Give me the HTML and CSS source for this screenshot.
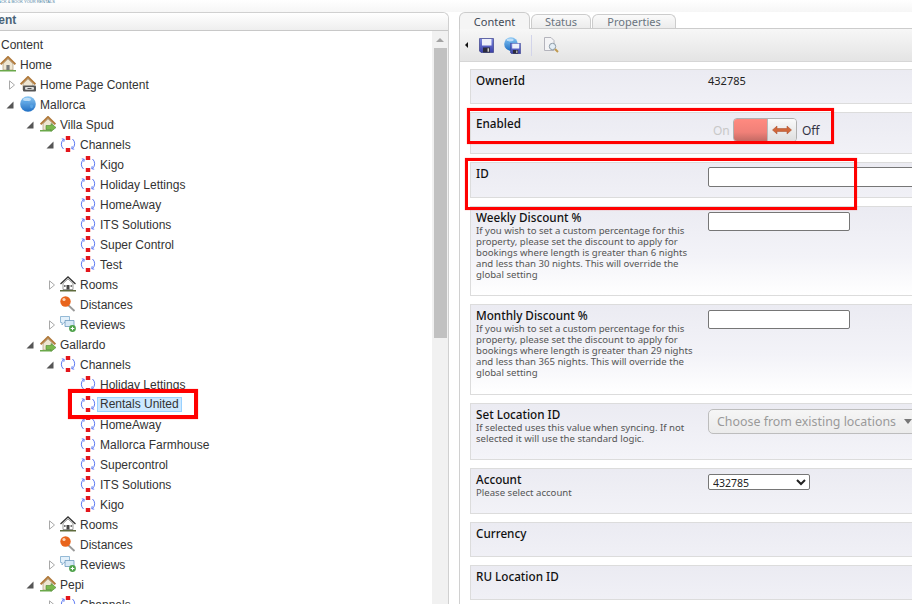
FILE: index.html
```html
<!DOCTYPE html>
<html lang="en">
<head>
<meta charset="utf-8">
<title>Content</title>
<link rel="stylesheet" href="styles.css">
</head>
<body>
<svg class="defs" width="0" height="0" aria-hidden="true">
  <defs>
    <linearGradient id="gBlue" x1="0" y1="0" x2="0" y2="1"><stop offset="0" stop-color="#8cc8f4"/><stop offset="1" stop-color="#1f6fc4"/></linearGradient>
    <linearGradient id="gDisk" x1="0" y1="0" x2="0" y2="1"><stop offset="0" stop-color="#7a86e0"/><stop offset="1" stop-color="#3a40a8"/></linearGradient>
    <symbol id="i-open" viewBox="0 0 8 8"><path d="M7.5 0.5V7.5H0.5Z" fill="#555"/></symbol>
    <symbol id="i-closed" viewBox="0 0 6 10"><path d="M0.5 0.8L5.5 5L0.5 9.2Z" fill="#fff" stroke="#a8a8a8"/></symbol>
    <symbol id="i-roof" viewBox="0 0 16 16">
      <path d="M3 8V14H13V8L8 3Z" fill="#efe6d2" stroke="#a08a68" stroke-width=".6"/>
      <path d="M0.600 8.400L8 1L15.400 8.400" fill="none" stroke="#b07a3c" stroke-width="2"/>
      <rect x="6.400" y="9" width="3.200" height="5" fill="#77797a"/>
      <path d="M0 14H16V15.500H0Z" fill="#6aa84a"/>
    </symbol>
    <symbol id="i-homelink" viewBox="0 0 16 16">
      <path d="M3 8V14H13V8L8 3Z" fill="#efe6d2" stroke="#a08a68" stroke-width=".6"/>
      <path d="M0.600 8.400L8 1L15.400 8.400" fill="none" stroke="#b07a3c" stroke-width="2"/>
      <rect x="3" y="9.500" width="13" height="6" rx="1" fill="#555"/>
      <rect x="5" y="11" width="9" height="2.800" rx="1" fill="#ddd"/>
      <rect x="7.500" y="12" width="4" height=".8" fill="#333"/>
    </symbol>
    <symbol id="i-globe" viewBox="0 0 16 16">
      <circle cx="8" cy="8" r="7.800" fill="url(#gBlue)"/>
      <path d="M3 6C5 3 7 3.500 8 5S5 8 4 7.500ZM10 9C12 8 14 9 13 11S10 13 10 9Z" fill="#5aa5e6"/>
      <ellipse cx="7" cy="3.400" rx="4" ry="1.600" fill="#cfe8fb" opacity=".8"/>
    </symbol>
    <symbol id="i-villa" viewBox="0 0 16 16">
      <path d="M3 8V14H13V8L8 3Z" fill="#efe6d2" stroke="#a08a68" stroke-width=".6"/>
      <path d="M0.600 8.400L8 1L15.400 8.400" fill="none" stroke="#b07a3c" stroke-width="2"/>
      <path d="M0 14H11V15.500H0Z" fill="#6aa84a"/>
      <path d="M6 9.500H11V7.500L16 11.500L11 15.500V13.500H6Z" fill="#7cb84e" stroke="#4a8a30" stroke-width=".6"/>
    </symbol>
    <symbol id="i-channel" viewBox="0 0 16 16">
      <path d="M3.500 3.500A6.300 6.300 0 0 0 3.500 13" fill="none" stroke="#4a6af0" stroke-width=".9"/>
      <path d="M1.800 2.800L4.300 3.300L3.800 5.800" fill="none" stroke="#4a6af0" stroke-width=".9"/>
      <path d="M12.500 12.500A6.300 6.300 0 0 0 12.500 3" fill="none" stroke="#4a6af0" stroke-width=".9"/>
      <path d="M14.200 13.200L11.700 12.700L12.200 10.200" fill="none" stroke="#4a6af0" stroke-width=".9"/>
      <rect x="5.800" y="0" width="4.400" height="4" fill="#e3161c"/>
      <rect x="5.800" y="12" width="4.400" height="4" fill="#e3161c"/>
    </symbol>
    <symbol id="i-rooms" viewBox="0 0 16 16">
      <path d="M3 7.500V13.500H13V7.500L8 3Z" fill="#fff" stroke="#555" stroke-width=".6"/>
      <path d="M0.500 8L8 1L15.500 8" fill="none" stroke="#333" stroke-width="1.300"/>
      <rect x="6.500" y="9" width="3" height="4.500" fill="#444"/>
      <rect x="4" y="9" width="1.600" height="2" fill="#777"/>
      <rect x="10.500" y="9" width="1.600" height="2" fill="#777"/>
      <path d="M0 14H16V15.500H0Z" fill="#5e6b3c"/>
    </symbol>
    <symbol id="i-pin" viewBox="0 0 16 16">
      <path d="M7 8L14.500 15" stroke="#999" stroke-width="1.800"/>
      <circle cx="5.500" cy="5.500" r="5.200" fill="#e8641c"/>
      <circle cx="4" cy="3.500" r="1.600" fill="#fbd3b4"/>
    </symbol>
    <symbol id="i-reviews" viewBox="0 0 16 16">
      <path d="M0.500 0.500H9.500V6.500H4L2 9V6.500H0.500Z" fill="#e4f1fb" stroke="#7ea9cc" stroke-width=".8"/>
      <path d="M5 4.500H14V10.500H12.500V12.500L10 10.500H5Z" fill="#d6e8f6" stroke="#6c98bd" stroke-width=".8"/>
      <circle cx="12.500" cy="12.500" r="3.400" fill="#4ea24a"/>
      <path d="M12.500 10.700V14.300M10.700 12.500H14.300" stroke="#fff" stroke-width="1.100"/>
    </symbol>
    <symbol id="i-disk" viewBox="0 0 15 15">
      <path d="M0.500 0.500H14.500V14.500H2L0.500 13Z" fill="url(#gDisk)" stroke="#2a2f7a" stroke-width=".6"/>
      <rect x="3" y="1" width="9.500" height="6.500" fill="#eef0fa"/>
      <rect x="4" y="9.500" width="7" height="5" fill="#2b2b3c"/>
      <rect x="8.500" y="10.300" width="1.600" height="3.400" fill="#ccc"/>
    </symbol>
  </defs>
</svg>

<div class="brandbar"><span class="brandtext">TRACK &amp; BOOK YOUR RENTALS</span></div>

<main class="workspace">
  <section class="treepanel">
    <h2 class="panelhead">Content</h2>
    <div class="treebody">
      <ul class="tree">
        <li><div class="rootnode">Content</div></li>
        <li>
          <div class="node"><span class="twist"></span><svg class="ico"><use href="#i-roof"/></svg><span>Home</span></div>
          <ul>
            <li><div class="node"><svg class="twist closed"><use href="#i-closed"/></svg><svg class="ico"><use href="#i-homelink"/></svg><span>Home Page Content</span></div></li>
            <li>
              <div class="node"><svg class="twist open"><use href="#i-open"/></svg><svg class="ico"><use href="#i-globe"/></svg><span>Mallorca</span></div>
              <ul>
                <li>
                  <div class="node"><svg class="twist open"><use href="#i-open"/></svg><svg class="ico"><use href="#i-villa"/></svg><span>Villa Spud</span></div>
                  <ul>
                    <li>
                      <div class="node"><svg class="twist open"><use href="#i-open"/></svg><svg class="ico"><use href="#i-channel"/></svg><span>Channels</span></div>
                      <ul>
                        <li><div class="node"><span class="twist"></span><svg class="ico"><use href="#i-channel"/></svg><span>Kigo</span></div></li>
                        <li><div class="node"><span class="twist"></span><svg class="ico"><use href="#i-channel"/></svg><span>Holiday Lettings</span></div></li>
                        <li><div class="node"><span class="twist"></span><svg class="ico"><use href="#i-channel"/></svg><span>HomeAway</span></div></li>
                        <li><div class="node"><span class="twist"></span><svg class="ico"><use href="#i-channel"/></svg><span>ITS Solutions</span></div></li>
                        <li><div class="node"><span class="twist"></span><svg class="ico"><use href="#i-channel"/></svg><span>Super Control</span></div></li>
                        <li><div class="node"><span class="twist"></span><svg class="ico"><use href="#i-channel"/></svg><span>Test</span></div></li>
                      </ul>
                    </li>
                    <li><div class="node"><svg class="twist closed"><use href="#i-closed"/></svg><svg class="ico"><use href="#i-rooms"/></svg><span>Rooms</span></div></li>
                    <li><div class="node"><span class="twist"></span><svg class="ico"><use href="#i-pin"/></svg><span>Distances</span></div></li>
                    <li><div class="node"><svg class="twist closed"><use href="#i-closed"/></svg><svg class="ico"><use href="#i-reviews"/></svg><span>Reviews</span></div></li>
                  </ul>
                </li>
                <li>
                  <div class="node"><svg class="twist open"><use href="#i-open"/></svg><svg class="ico"><use href="#i-villa"/></svg><span>Gallardo</span></div>
                  <ul>
                    <li>
                      <div class="node"><svg class="twist open"><use href="#i-open"/></svg><svg class="ico"><use href="#i-channel"/></svg><span>Channels</span></div>
                      <ul>
                        <li><div class="node"><span class="twist"></span><svg class="ico"><use href="#i-channel"/></svg><span>Holiday Lettings</span></div></li>
                        <li><div class="node"><span class="twist"></span><svg class="ico"><use href="#i-channel"/></svg><span class="selected">Rentals United</span></div></li>
                        <li><div class="node"><span class="twist"></span><svg class="ico"><use href="#i-channel"/></svg><span>HomeAway</span></div></li>
                        <li><div class="node"><span class="twist"></span><svg class="ico"><use href="#i-channel"/></svg><span>Mallorca Farmhouse</span></div></li>
                        <li><div class="node"><span class="twist"></span><svg class="ico"><use href="#i-channel"/></svg><span>Supercontrol</span></div></li>
                        <li><div class="node"><span class="twist"></span><svg class="ico"><use href="#i-channel"/></svg><span>ITS Solutions</span></div></li>
                        <li><div class="node"><span class="twist"></span><svg class="ico"><use href="#i-channel"/></svg><span>Kigo</span></div></li>
                      </ul>
                    </li>
                    <li><div class="node"><svg class="twist closed"><use href="#i-closed"/></svg><svg class="ico"><use href="#i-rooms"/></svg><span>Rooms</span></div></li>
                    <li><div class="node"><span class="twist"></span><svg class="ico"><use href="#i-pin"/></svg><span>Distances</span></div></li>
                    <li><div class="node"><svg class="twist closed"><use href="#i-closed"/></svg><svg class="ico"><use href="#i-reviews"/></svg><span>Reviews</span></div></li>
                  </ul>
                </li>
                <li>
                  <div class="node"><svg class="twist open"><use href="#i-open"/></svg><svg class="ico"><use href="#i-villa"/></svg><span>Pepi</span></div>
                  <ul>
                    <li><div class="node"><svg class="twist closed"><use href="#i-closed"/></svg><svg class="ico"><use href="#i-channel"/></svg><span>Channels</span></div></li>
                  </ul>
                </li>
              </ul>
            </li>
          </ul>
        </li>
      </ul>
      <div class="scrollbar">
        <span class="scrollup"></span>
        <span class="scrollthumb"></span>
      </div>
    </div>
  </section>

  <section class="editor">
    <nav class="tabs">
      <span class="tab active">Content</span>
      <span class="tab">Status</span>
      <span class="tab">Properties</span>
    </nav>
    <div class="editbody">
      <div class="toolbar">
        <span class="collapse"></span>
        <svg class="tool save"><use href="#i-disk"/></svg>
        <span class="tool globedisk">
          <svg class="gd-globe"><use href="#i-globe"/></svg>
          <svg class="gd-disk"><use href="#i-disk"/></svg>
        </span>
        <span class="toolsep"></span>
        <svg class="tool preview" viewBox="0 0 16 16">
          <path d="M1.500 0.500H8L11 3.500V13.500H1.500Z" fill="#f4f4f6" stroke="#b4b4bc"/>
          <circle cx="9.500" cy="9.500" r="3.200" fill="#e4eef6" stroke="#8c9aa6"/>
          <path d="M12 12L15 15" stroke="#c09a50" stroke-width="2"/>
        </svg>
      </div>
      <div class="fields">
        <div class="field">
          <div class="label"><h3>OwnerId</h3></div>
          <div class="control value">432785</div>
        </div>
        <div class="field tall-enabled">
          <div class="label"><h3>Enabled</h3></div>
          <div class="control switchwrap">
            <span class="sw-on">On</span>
            <span class="switch">
              <span class="sw-fill"></span>
              <span class="sw-handle">
                <svg width="20" height="10" viewBox="0 0 20 10"><path d="M0.500 5L5 1V3.500H15V1L19.500 5L15 9V6.500H5V9Z" fill="#d0673a" stroke="#a94a24" stroke-width=".5"/></svg>
              </span>
            </span>
            <span class="sw-off">Off</span>
          </div>
        </div>
        <div class="field tall-id">
          <div class="label"><h3>ID</h3></div>
          <div class="control"><input class="text wide" type="text" aria-label="ID"></div>
        </div>
        <div class="field">
          <div class="label">
            <h3>Weekly Discount %</h3>
            <p>If you wish to set a custom percentage for this property, please set the discount to apply for bookings where length is greater than 6 nights and less than 30 nights. This will override the global setting</p>
          </div>
          <div class="control"><input class="text" type="text" aria-label="Weekly Discount"></div>
        </div>
        <div class="field tall-monthly">
          <div class="label">
            <h3>Monthly Discount %</h3>
            <p>If you wish to set a custom percentage for this property, please set the discount to apply for bookings where length is greater than 29 nights and less than 365 nights. This will override the global setting</p>
          </div>
          <div class="control"><input class="text" type="text" aria-label="Monthly Discount"></div>
        </div>
        <div class="field">
          <div class="label">
            <h3>Set Location ID</h3>
            <p>If selected uses this value when syncing. If not selected it will use the standard logic.</p>
          </div>
          <div class="control"><div class="combo"><span>Choose from existing locations</span><i class="comboarrow"></i></div></div>
        </div>
        <div class="field">
          <div class="label">
            <h3>Account</h3>
            <p>Please select account</p>
          </div>
          <div class="control"><select class="account" aria-label="Account"><option>432785</option></select></div>
        </div>
        <div class="field"><div class="label"><h3>Currency</h3></div></div>
        <div class="field"><div class="label"><h3>RU Location ID</h3></div></div>
      </div>
    </div>
  </section>
</main>

<div class="mark mark-tree"></div>
<div class="mark mark-enabled"></div>
<div class="mark mark-id"></div>
</body>
</html>
```

FILE: styles.css
```css
* { box-sizing: border-box; }

html, body {
  margin: 0;
  height: 100%;
  overflow: hidden;
  background: #fff;
}

body {
  position: relative;
  width: 912px;
  height: 604px;
  font-family: "Liberation Sans", Arial, sans-serif;
  font-size: 12px;
  color: #333;
}

.defs { position: absolute; }

.brandbar {
  height: 12px;
  overflow: hidden;
  background: linear-gradient(#fff, #f6f6f6);
}

.brandtext {
  display: block;
  margin: -1px 0 0 -7px;
  font-size: 4px;
  line-height: 5px;
  letter-spacing: 0;
  white-space: nowrap;
  color: #4b7f9e;
}

.workspace {
  display: flex;
  align-items: flex-start;
  margin-left: -30px;
}

.treepanel {
  flex: none;
  width: 479px;
  height: 600px;
  border: 1px solid #d0d0d0;
  border-bottom: 0;
  border-radius: 6px 6px 0 0;
}

.panelhead {
  margin: 0;
  height: 18px;
  padding-left: 0;
  font-size: 12px;
  line-height: 15px;
  font-weight: bold;
  color: #4a6478;
  background: linear-gradient(#fff, #eee);
  border-bottom: 1px solid #c8c8c8;
  border-radius: 6px 6px 0 0;
}

.treebody {
  position: relative;
  height: 580px;
  overflow: hidden;
  padding: 4px 0 0 29px;
}

.tree, .tree ul {
  list-style: none;
  margin: 0;
  padding: 0;
}

.tree ul { padding-left: 20px; }

.rootnode {
  height: 20px;
  line-height: 20px;
  padding-left: 1px;
}

.node {
  display: flex;
  align-items: center;
  height: 20px;
  margin-left: -14px;
  white-space: nowrap;
}

.twist {
  flex: none;
  width: 14px;
  height: 10px;
}

.twist.open { width: 8px; height: 8px; margin-right: 6px; }
.twist.closed { width: 6px; height: 10px; margin: 0 5px 0 3px; }

.ico {
  flex: none;
  width: 16px;
  height: 16px;
  margin: -2px 4px 0 0;
}

.selected {
  margin: -1px 0 0 -3px;
  padding: 0 2px;
  height: 15px;
  line-height: 13px;
  background: #cce8ff;
  border: 1px solid #99d1ff;
}

.scrollbar {
  position: absolute;
  top: 0;
  right: 0;
  width: 16px;
  height: 100%;
  background: #f1f1f1;
}

.scrollup {
  position: absolute;
  top: 7px;
  left: 4px;
  border: 4px solid transparent;
  border-top: 0;
  border-bottom: 4px solid #a3a3a3;
}

.scrollthumb {
  position: absolute;
  top: 17px;
  left: 2px;
  width: 13px;
  height: 290px;
  background: #c1c1c1;
}

.editor {
  flex: none;
  width: 620px;
  margin-left: 10px;
  font-family: "Noto Sans", "Liberation Sans", sans-serif;
}

.tabs {
  display: flex;
  align-items: flex-end;
  height: 16px;
  padding-left: 0;
}

.tab {
  display: flex;
  align-items: center;
  justify-content: center;
  height: 14px;
  width: 60px;
  margin-right: 1px;
  font-size: 11px;
  color: #6a7480;
  background: linear-gradient(#fafafa, #ececec);
  border: 1px solid #ccc;
  border-bottom: 0;
  border-radius: 6px 6px 0 0;
}

.tab:last-child { width: 84px; }

.tab.active {
  width: 71px;
  height: 17px;
  margin-bottom: -1px;
  position: relative;
  color: #3f4a55;
  background: #f5f5f5;
}

.editbody {
  height: 576px;
  border-left: 1px solid #d0d0d0;
  border-top: 1px solid #ccc;
}

.toolbar {
  display: flex;
  align-items: center;
  height: 33px;
  padding-left: 5px;
  background: linear-gradient(#f7f7f7, #e4e4e4);
  border-bottom: 1px solid #d6d6d6;
}

.collapse {
  flex: none;
  margin-right: 11px;
  border: 3px solid transparent;
  border-left: 0;
  border-right: 3px solid #111;
}

.tool { flex: none; width: 15px; height: 15px; }

.save { margin-right: 10px; }

.globedisk {
  position: relative;
  width: 17px;
  height: 17px;
  margin-right: 10px;
}

.gd-globe {
  position: absolute;
  left: 0;
  top: 0;
  width: 14px;
  height: 14px;
}

.gd-disk {
  position: absolute;
  right: 0;
  bottom: 0;
  width: 11px;
  height: 11px;
}

.toolsep {
  flex: none;
  width: 1px;
  height: 21px;
  margin-right: 11px;
  background: #d2d4ea;
}

.preview { width: 16px; height: 16px; }

.fields {
  padding: 7px 0 0 10px;
}

.field {
  display: flex;
  min-height: 35px;
  margin-bottom: 8px;
  padding: 3px 0 15px 5px;
  border: 1px solid #dcdcdc;
  border-right: 0;
  background: linear-gradient(#ebebf2, #f3f3f8 50px, #fff 88px);
}

.tall-enabled { height: 42px; padding-bottom: 11px; }
.tall-id { height: 36px; padding-bottom: 4px; }
.tall-monthly { min-height: 91px; }

.label {
  flex: none;
  width: 232px;
}

.label h3 {
  margin: 0;
  font-size: 11.700px;
  line-height: 15px;
  font-weight: 500;
  color: #111;
}

.label p {
  width: 222px;
  margin: 0;
  font-size: 9.600px;
  line-height: 11px;
  color: #555;
}

.control { flex: none; margin-top: 2px; }

.tall-id .control { margin-top: 1px; }

.value {
  margin-top: 0;
  font-size: 11px;
  line-height: 15px;
  color: #222;
}

.text {
  display: block;
  width: 142px;
  height: 19px;
  margin: 0;
  padding: 0;
  background: #fff;
  border: 1px solid #767676;
  border-radius: 2px;
}

.text.wide { width: 300px; height: 20px; }

.switchwrap {
  display: flex;
  align-items: center;
  height: 24px;
  font-size: 12px;
}

.sw-on {
  width: 25px;
  padding-left: 5px;
  color: #c8c8c8;
}

.switch {
  display: flex;
  width: 64px;
  height: 24px;
  overflow: hidden;
  border: 1px solid #b0b0b0;
  border-radius: 4px;
}

.sw-fill {
  flex: 1;
  background: linear-gradient(#ff8a80, #f08078 60%, #c46a64);
}

.sw-handle {
  display: flex;
  align-items: center;
  justify-content: center;
  width: 29px;
  background: linear-gradient(#fafafa, #dedede);
  border-left: 1px solid #b8b8b8;
}

.sw-off {
  margin-left: 5px;
  color: #334;
}

.combo {
  display: flex;
  align-items: center;
  gap: 8px;
  width: 300px;
  height: 25px;
  padding: 0 8px;
  font-size: 12.400px;
  color: #9a9a9a;
  background: linear-gradient(#f6f6f6, #ebebeb);
  border: 1px solid #bdbdbd;
  border-radius: 5px;
}

.comboarrow {
  flex: none;
  border: 4px solid transparent;
  border-bottom: 0;
  border-top: 5px solid #777;
}

.account {
  display: block;
  width: 102px;
  height: 16px;
  margin: 0;
  padding: 0;
  font-family: "Noto Sans", "Liberation Sans", sans-serif;
  font-size: 10.500px;
  line-height: 14px;
  color: #222;
  background: #fff;
  border: 1px solid #767676;
  border-radius: 2px;
}

.mark {
  position: absolute;
  border: 3px solid #f00;
  box-shadow: 0 0 1px rgba(255, 0, 0, .5);
  pointer-events: none;
}

.mark-tree { left: 68px; top: 389px; width: 130px; height: 30px; border-width: 4px; }
.mark-enabled { left: 467px; top: 108px; width: 367px; height: 36px; }
.mark-id { left: 465px; top: 158px; width: 392px; height: 52px; }
```
